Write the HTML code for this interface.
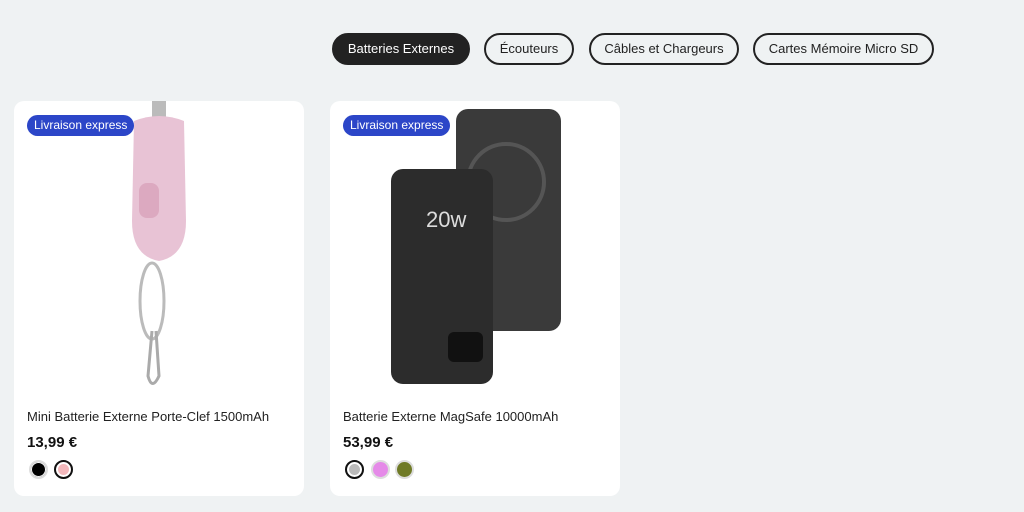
<!DOCTYPE html><html><head><style>
body{margin:0;width:1024px;height:512px;background:#eff2f3;font-family:"Liberation Sans",sans-serif;position:relative;overflow:hidden}
.pill{position:absolute;top:33px;height:32px;box-sizing:border-box;border:2px solid #222;border-radius:16px;font-size:13px;line-height:28px;text-align:center;color:#222}
.card{position:absolute;top:101px;width:290px;height:395px;background:#fff;border-radius:10px}
.badge{position:absolute;left:13px;top:14px;background:#2c46c8;color:#fff;font-size:12px;padding:0 7px;height:21px;line-height:21px;border-radius:11px;z-index:2}
.name{position:absolute;left:13px;top:308px;font-size:13px;color:#222}
.price{position:absolute;left:13px;top:333px;font-size:15px;font-weight:bold;color:#111}
.sw{position:absolute;top:359px;width:19px;height:19px;border-radius:50%;border:2px solid #ddd;box-sizing:border-box}
.sel{border:2px solid #111;box-shadow:inset 0 0 0 2px #fff}
</style></head><body>
<div class="pill" style="left:332px;width:138px;background:#222;color:#fff">Batteries Externes</div>
<div class="pill" style="left:484px;width:90px">Écouteurs</div>
<div class="pill" style="left:589px;width:150px">Câbles et Chargeurs</div>
<div class="pill" style="left:753px;width:181px">Cartes Mémoire Micro SD</div>

<div class="card" style="left:14px">
<div class="badge">Livraison express</div>
<svg style="position:absolute;left:100px;top:0" width="90" height="290">
<rect x="38" y="0" width="14" height="20" fill="#bbb"/>
<path d="M20 20 Q45 10 70 20 L72 120 Q72 155 45 160 Q18 155 18 120 Z" fill="#e8c3d5"/>
<rect x="25" y="82" width="20" height="35" rx="8" fill="#dca9c0"/>
<ellipse cx="38" cy="200" rx="12" ry="38" fill="none" stroke="#bbb" stroke-width="3"/>
<path d="M38 230 L34 275 Q38 290 45 275 L42 230" fill="none" stroke="#aaa" stroke-width="3"/>
</svg>
<div class="name">Mini Batterie Externe Porte-Clef 1500mAh</div>
<div class="price">13,99 €</div>
<div class="sw" style="left:15px;background:#000;box-shadow:inset 0 0 0 1px #fff"></div>
<div class="sw sel" style="left:40px;background:#f4b8bc"></div>
</div>

<div class="card" style="left:330px">
<div class="badge">Livraison express</div>
<svg style="position:absolute;left:58px;top:6px" width="180" height="280">
<rect x="68" y="2" width="105" height="222" rx="12" fill="#3a3a3a"/>
<circle cx="118" cy="75" r="38" fill="none" stroke="#555" stroke-width="4"/>
<rect x="3" y="62" width="102" height="215" rx="12" fill="#2c2c2c"/>
<text x="38" y="120" fill="#ddd" font-size="22" font-family="Liberation Sans">20w</text>
<rect x="60" y="225" width="35" height="30" rx="6" fill="#111"/>
</svg>
<div class="name">Batterie Externe MagSafe 10000mAh</div>
<div class="price">53,99 €</div>
<div class="sw sel" style="left:15px;background:#bbb"></div>
<div class="sw" style="left:41px;background:#e58ae8"></div>
<div class="sw" style="left:65px;background:#6f7a26"></div>
</div>
</body></html>
